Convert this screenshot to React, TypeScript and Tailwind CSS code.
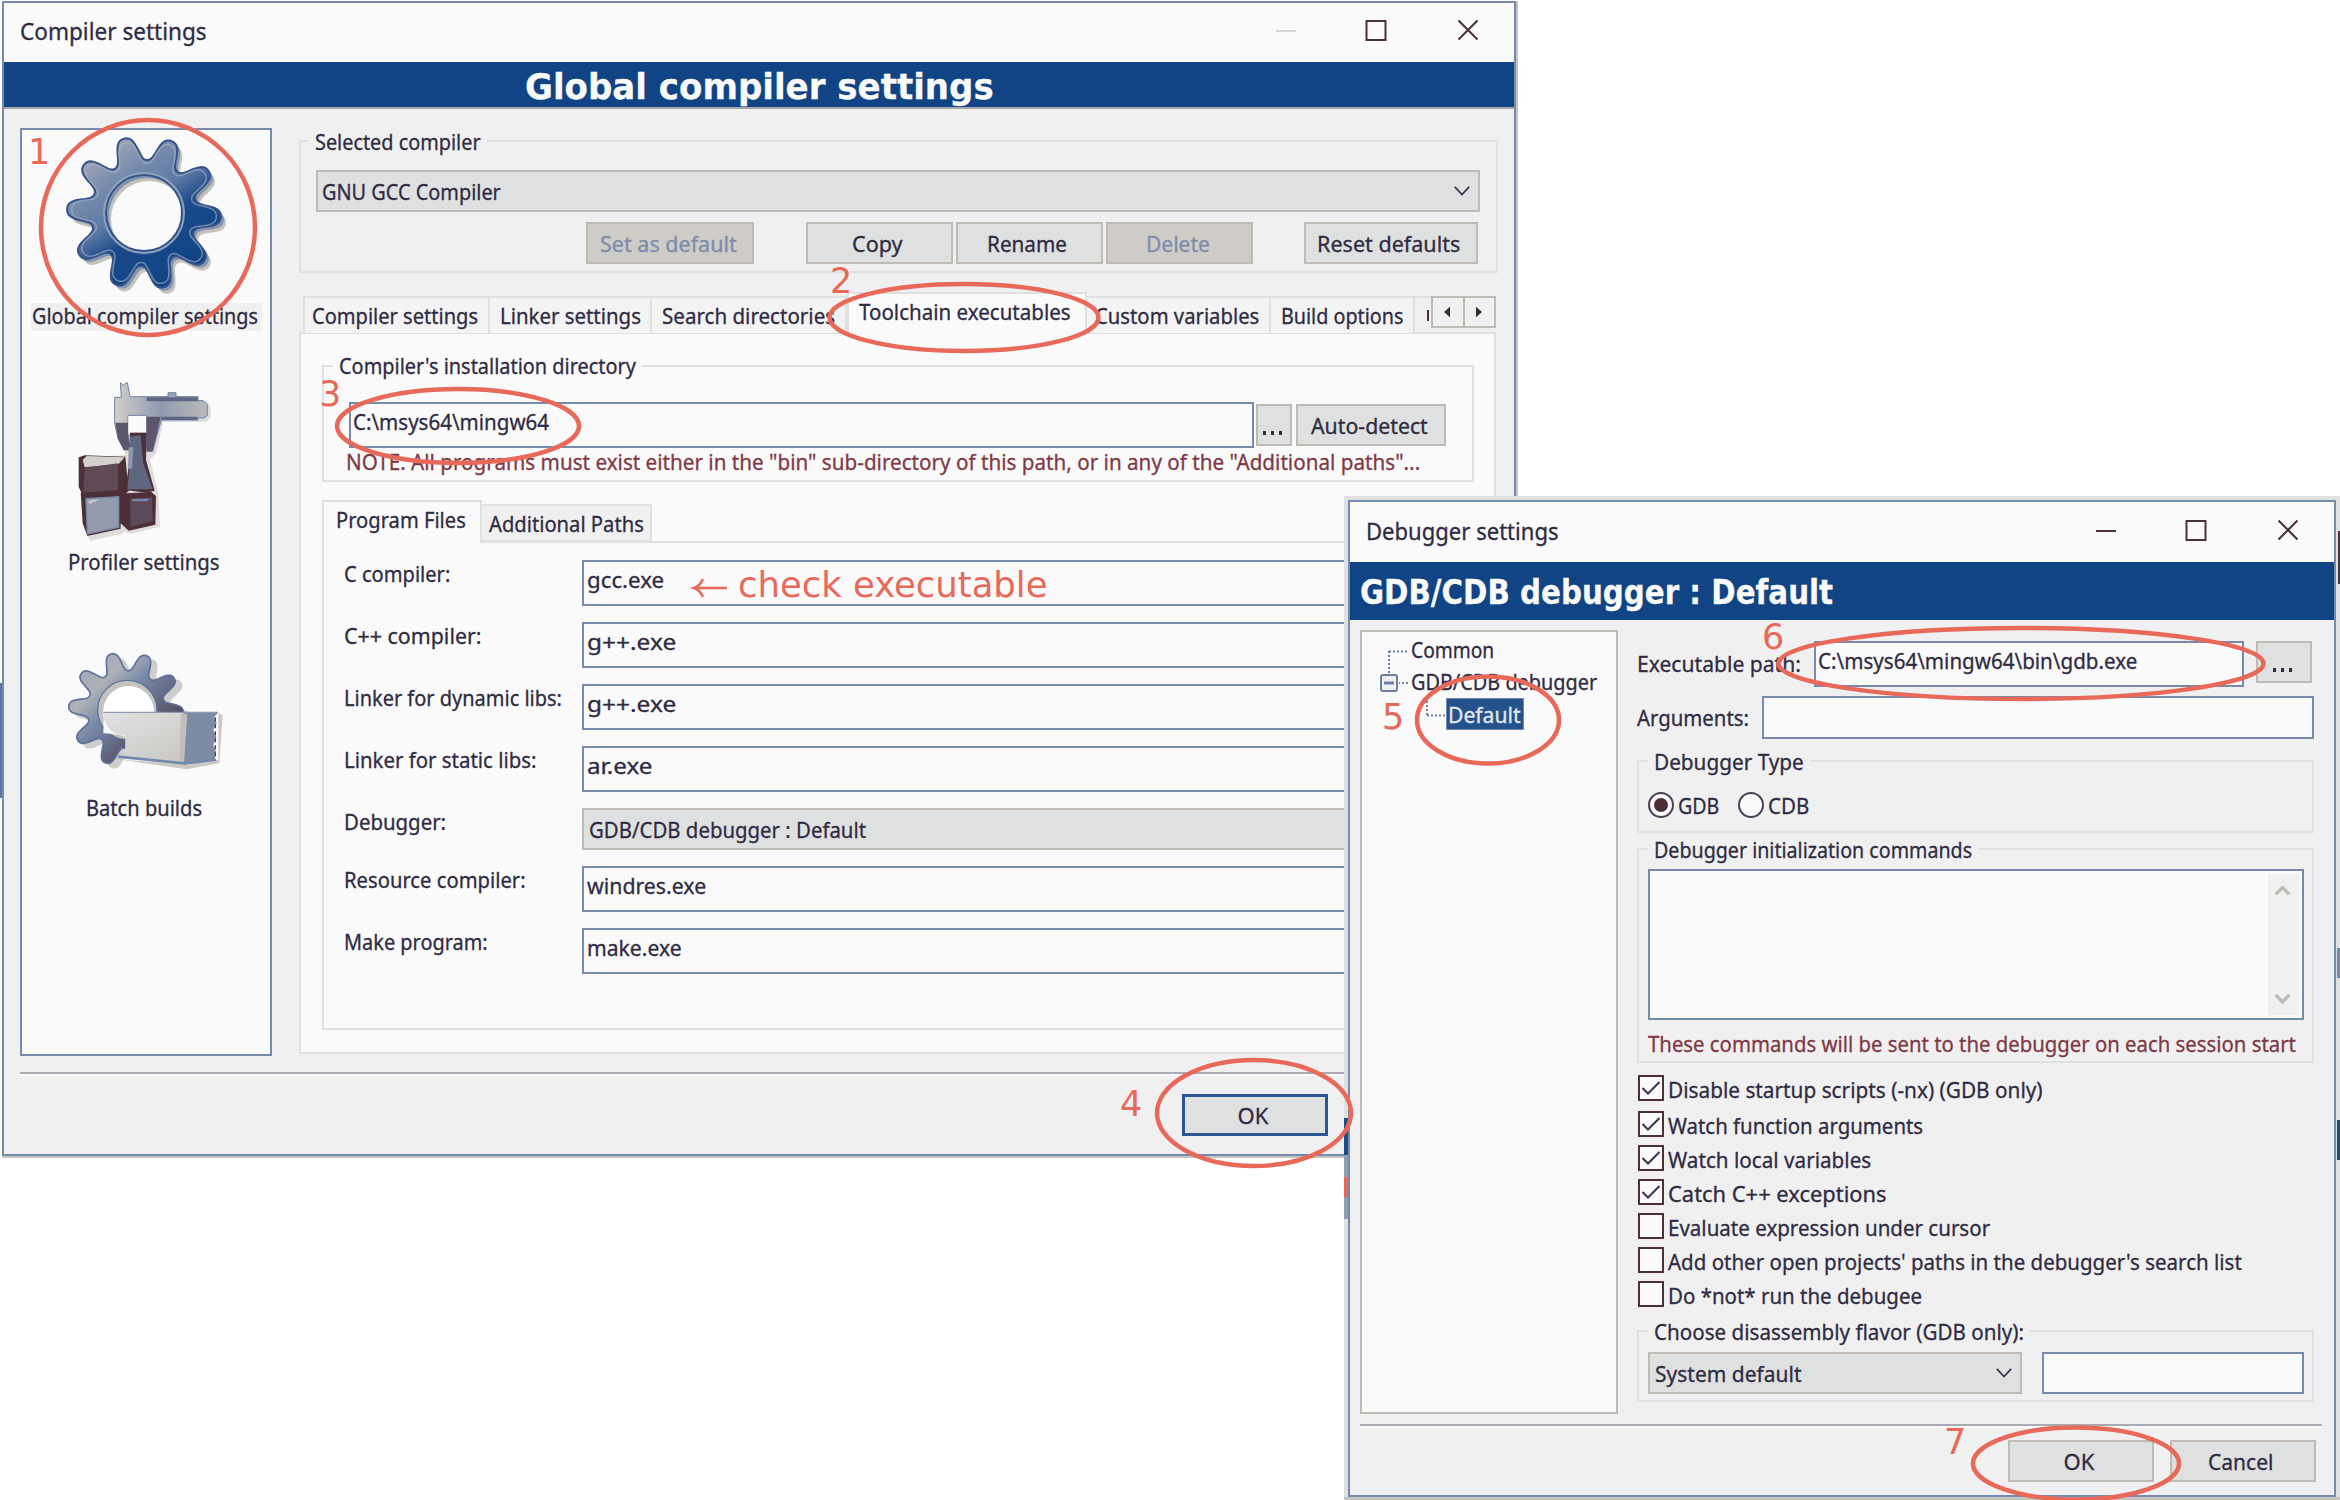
import { useLayoutEffect, useRef, useState } from "react";
import type { ReactNode } from "react";
import clsx from "clsx";

/* Single-line label squeezed or stretched to a fixed width. */
function T({ w, children, className }: { w: number; children: ReactNode; className?: string }) {
  const ref = useRef<HTMLSpanElement>(null);
  const [scale, setScale] = useState(1);
  useLayoutEffect(() => {
    if (ref.current) setScale(w / ref.current.offsetWidth);
  }, [w]);
  return (
    <span className={clsx("block shrink-0 whitespace-nowrap", className)} style={{ width: w }}>
      <span ref={ref} className="inline-block origin-left" style={{ transform: `scaleX(${scale})` }}>
        {children}
      </span>
    </span>
  );
}

function Button({ w, tw, children, className, disabled }: { w: number; tw: number; children: string; className?: string; disabled?: boolean }) {
  return (
    <button
      className={clsx(
        "flex h-[42px] shrink-0 items-center justify-center border-2 border-[#c0bab5]",
        disabled ? "bg-[#cfcbc7] text-[#7c8dab]" : "bg-[#dfe1e0]",
        className,
      )}
      style={{ width: w }}
    >
      <T w={tw}>{children}</T>
    </button>
  );
}

function Dots({ className }: { className?: string }) {
  return (
    <span className={clsx("flex gap-[5px]", className)}>
      <i className="h-[4px] w-[3px] bg-[#2f2b42]" />
      <i className="h-[4px] w-[3px] bg-[#2f2b42]" />
      <i className="h-[4px] w-[3px] bg-[#2f2b42]" />
    </span>
  );
}

function Group({ legend, w, className, legendClass, children }: { legend: string; w: number; className: string; legendClass: string; children?: ReactNode }) {
  return (
    <div className={clsx("relative shrink-0 border-2 border-[#dfe1e0]", className)}>
      <div className={clsx("absolute -top-[15px] flex h-[28px] items-center px-[6px]", legendClass)}>
        <T w={w}>{legend}</T>
      </div>
      {children}
    </div>
  );
}

function Chevron({ className, up, w = 18, stroke = "#3a3350", sw = 2 }: { className?: string; up?: boolean; w?: number; stroke?: string; sw?: number }) {
  return (
    <svg width={w} height={w * 0.6} viewBox="0 0 20 12" className={className} fill="none" stroke={stroke} strokeWidth={sw}>
      <path d={up ? "M2 11 L10 3 L18 11" : "M2 1 L10 9.5 L18 1"} />
    </svg>
  );
}

function WindowButtons({ faded, className }: { faded?: boolean; className?: string }) {
  return (
    <svg width="204" height="24" viewBox="0 0 204 24" className={className} fill="none" stroke="#4d2f38" strokeWidth="2">
      <path d="M1 12 H21" stroke={faded ? "#d4d4d4" : "#4d2f38"} />
      <rect x="91.500" y="2" width="19" height="19" />
      <path d="M183.500 1.500 L202.500 20.500 M202.500 1.500 L183.500 20.500" />
    </svg>
  );
}

function gearPath(cx: number, cy: number, base: number, amp: number, turn: number) {
  const pts: string[] = [];
  for (let a = 0; a < 360; a += 1.5) {
    const c = Math.cos((10 * (a - turn) * Math.PI) / 180);
    const r = base + (amp * Math.tanh(1.3 * c)) / Math.tanh(1.3);
    const t = (a * Math.PI) / 180;
    pts.push(`${(cx + r * Math.cos(t)).toFixed(2)} ${(cy + r * Math.sin(t)).toFixed(2)}`);
  }
  return `M${pts.join("L")}Z`;
}
function ring(cx: number, cy: number, r: number) {
  return `M${cx - r} ${cy}a${r} ${r} 0 1 0 ${2 * r} 0a${r} ${r} 0 1 0 ${-2 * r} 0Z`;
}

function BlueGear() {
  const d = gearPath(78, 83, 65, 12, 3) + ring(78, 83, 38);
  return (
    <svg width="168" height="170" viewBox="0 0 168 170" className="ml-[44px] shrink-0">
      <defs>
        <linearGradient id="blue" x1="0.15" y1="0" x2="0.75" y2="0.9">
          <stop offset="0" stopColor="#b3b3b9" />
          <stop offset="0.3" stopColor="#768bab" />
          <stop offset="0.5" stopColor="#5d7aa5" />
          <stop offset="0.66" stopColor="#1a4a89" />
          <stop offset="1" stopColor="#104485" />
        </linearGradient>
      </defs>
      <path d={d} fill="#c6c1bd" fillRule="evenodd" transform="translate(5 6)" />
      <path d={d} fill="#8495b0" fillRule="evenodd" transform="translate(3 3)" />
      <path d={d} fill="url(#blue)" fillRule="evenodd" stroke="#33538a" strokeWidth="2" />
      <path d={gearPath(78, 83, 61, 11.5, 3)} fill="none" stroke="#aab4c6" strokeWidth="1.5" opacity="0.6" />
      <circle cx="78" cy="83" r="40" fill="none" stroke="#8fa0bb" strokeWidth="2" />
    </svg>
  );
}

function CaliperIcon() {
  return (
    <svg width="200" height="180" viewBox="0 0 600 540" className="ml-[28px] shrink-0">
      <defs>
        <linearGradient id="steel" x1="0" y1="0" x2="1" y2="0">
          <stop offset="0" stopColor="#d2cecb" />
          <stop offset="0.5" stopColor="#8e9ab0" />
          <stop offset="1" stopColor="#bdb9b8" />
        </linearGradient>
      </defs>
      <path d="M206 92H470L482 112V140L470 156H340L318 250 300 270 325 370 330 470 240 492 222 484 216 492 120 512 104 480V262L226 256 206 190Z" fill="#dedddb" />
      <path d="M211 38L220 46 226 40 232 38 240 80H354V68H378V80H444V92H460L472 104V136L462 144H444V150H334L318 206 308 244H290V136H234V190L240 240H222L204 206 194 160V82H214Z" fill="url(#steel)" stroke="#6f83a5" strokeWidth="3" />
      <path d="M290 82H444V94H290Z M334 140H442V150H334Z" fill="#5d6684" />
      <path d="M196 158H234V190L240 240H222L204 206Z M290 140H332L308 244H290Z" fill="#5c566d" />
      <path d="M235 138H288V186H248L235 192Z" fill="#fafafa" />
      <path d="M86 262L104 256 226 260 236 364 212 380 96 372 86 350Z" fill="#4d2f38" />
      <path d="M98 270L110 258 224 262 206 282 104 292Z" fill="#d3d0ce" />
      <path d="M104 294L204 280V364L112 376 100 366Z" fill="#614956" />
      <path d="M240 188H290L288 270 314 362 290 368 226 360 236 290Z" fill="#4d2f38" />
      <path d="M240 200L272 196 280 280 308 358 232 358 238 296Z" fill="#5f667f" />
      <path d="M236 232H250L246 296H234Z" fill="#8e99b0" />
      <path d="M92 368L208 360 228 370 304 366 318 378 316 464 236 482 212 460V476L112 498 98 460Z" fill="#4d2f38" />
      <path d="M108 386L206 380V472L112 492Z" fill="#949bac" stroke="#768bab" strokeWidth="4" />
      <path d="M112 394L130 388 150 388 120 402Z" fill="#c9c5c2" />
      <path d="M240 388L306 382 308 454 242 470Z" fill="#5b4a5b" />
      <path d="M244 386H300L290 394H250Z" fill="#7789a6" />
    </svg>
  );
}

function BatchIcon() {
  return (
    <svg width="200" height="150" viewBox="0 0 600 450" className="ml-[28px] shrink-0">
      <defs>
        <linearGradient id="grey" x1="0.1" y1="0.1" x2="0.8" y2="0.8">
          <stop offset="0" stopColor="#9da6b5" />
          <stop offset="0.25" stopColor="#b0b1b8" />
          <stop offset="0.5" stopColor="#7486a6" />
          <stop offset="1" stopColor="#4f4258" />
        </linearGradient>
        <linearGradient id="box" x1="0" y1="0" x2="0.7" y2="1">
          <stop offset="0" stopColor="#e0e2e1" />
          <stop offset="1" stopColor="#ccc9c6" />
        </linearGradient>
        <clipPath id="gearclip">
          <path d="M0 0H600V248H160V310L226 316V450H0Z" />
        </clipPath>
      </defs>
      <g clipPath="url(#gearclip)">
        <path d={gearPath(238, 242, 146, 28, 3) + ring(232, 242, 82)} fill="#cfccc9" fillRule="evenodd" transform="translate(10 10)" />
        <path d={gearPath(228, 238, 144, 28, 3) + ring(232, 240, 88)} fill="url(#grey)" fillRule="evenodd" stroke="#5d7298" strokeWidth="5" />
        <circle cx="232" cy="240" r="80" fill="none" stroke="#c5c1bd" strokeWidth="14" />
        <circle cx="236" cy="244" r="76" fill="#fff" />
      </g>
      <path d="M204 388L410 418 508 400 518 256 505 250V390L408 404Z" fill="#cbc7c3" />
      <path d="M160 246H412L408 404 200 382 228 366V318L196 310Q160 290 160 246Z" fill="url(#box)" />
      <path d="M400 248H504L492 262 500 280 490 300 499 320 490 345 498 365 494 392 402 404Z" fill="#7e8ba5" />
      <path d="M392 252H412L402 402 388 396Z" fill="#c3beba" />
      <path d="M204 380L402 400 490 390" fill="none" stroke="#7389ab" strokeWidth="8" />
      <path d="M160 247H504" stroke="#8d9bb1" strokeWidth="4" />
      <path d="M496 262V392" stroke="#4d3a4d" strokeWidth="4" strokeDasharray="12 9" />
    </svg>
  );
}

const tabs: [string, string, number, string][] = [
  ["Compiler settings", "w-[187px] pl-[7px]", 166, ""],
  ["Linker settings", "w-[162px] pl-[10px]", 141, ""],
  ["Search directories", "w-[195px] pl-[10px]", 173, ""],
  ["Toolchain executables", "w-[240px] pl-[10px]", 212, "active"],
  ["Custom variables", "w-[184px] pl-[8px]", 164, ""],
  ["Build options", "w-[144px] pl-[10px]", 122, ""],
];

const programs: [string, number, string, number][] = [
  ["C compiler:", 106, "gcc.exe", 77],
  ["C++ compiler:", 138, "g++.exe", 89],
  ["Linker for dynamic libs:", 218, "g++.exe", 89],
  ["Linker for static libs:", 192, "ar.exe", 65],
  ["Debugger:", 102, "GDB/CDB debugger : Default", 277],
  ["Resource compiler:", 182, "windres.exe", 119],
  ["Make program:", 144, "make.exe", 95],
];

function CompilerWindow() {
  return (
    <section className="absolute top-px left-[2px] flex h-[1155px] w-[1514px] flex-col border-2 border-[#768bab] bg-[#f0f0f0] shadow-[1px_1px_0_1px_#c6c3c0]">
      <header className="flex h-[59px] shrink-0 items-center justify-between bg-[#fafafa] pr-[35px] pb-[3px] pl-[16px] text-[24px]">
        <T w={187}>Compiler settings</T>
        <WindowButtons faded className="-mt-[1px]" />
      </header>
      <div className="flex h-[47px] shrink-0 items-center border-b-2 border-[#a5a6ac] bg-[#104485] pl-[521px] font-['DejaVu_Sans'] text-[36px] leading-none font-bold text-[#fafafa]">
        <T w={469} className="pt-[4px]">Global compiler settings</T>
      </div>
      <div className="flex pt-[19px] pl-[16px]">
        <aside className="mr-[27px] flex h-[928px] w-[252px] shrink-0 flex-col border-2 border-[#768bab] bg-[#fafafa]">
          <BlueGear />
          <div className="mt-[3px] ml-[9px] flex h-[28px] w-[231px] items-center bg-[#f0f0f0] pb-[4px] pl-px">
            <T w={226}>Global compiler settings</T>
          </div>
          <div className="mt-[39px]"><CaliperIcon /></div>
          <div className="-mt-[3px] ml-[46px] flex h-[28px] items-center">
            <T w={152}>Profiler settings</T>
          </div>
          <div className="mt-[55px]"><BatchIcon /></div>
          <div className="mt-[13px] ml-[64px] flex h-[28px] items-center">
            <T w={116}>Batch builds</T>
          </div>
        </aside>

        <div className="flex w-[1199px] shrink-0 flex-col pt-[12px]">
          <Group legend="Selected compiler" w={166} className="h-[133px]" legendClass="left-[8px] bg-[#f0f0f0]">
            <div className="mt-[28px] ml-[15px] flex h-[42px] w-[1164px] items-center justify-between border-2 border-[#c0bab5] bg-[#dfe1e0] pr-[7px] pl-[4px]">
              <T w={179}>GNU GCC Compiler</T>
              <Chevron />
            </div>
            <div className="mt-[10px] ml-[285px] flex">
              <Button w={168} tw={137} className="pr-[4px]" disabled>Set as default</Button>
              <Button w={147} tw={51} className="ml-[52px] pr-[4px]">Copy</Button>
              <Button w={147} tw={80} className="ml-[3px] pr-[5px]">Rename</Button>
              <Button w={147} tw={64} className="ml-[3px] pr-[4px]" disabled>Delete</Button>
              <Button w={174} tw={143} className="ml-[51px] pr-[5px]">Reset defaults</Button>
            </div>
          </Group>

          <div className="relative z-10 mt-[19px] ml-[4px] flex h-[41px]">
            {tabs.map(([label, cls, w, active]) => (
              <div
                key={label}
                className={clsx(
                  "flex shrink-0 items-center border-t-2 border-r-2 border-[#dfe1e0]",
                  cls,
                  active ? "-mb-px h-[42px] border-l-2 bg-[#fafafa] pb-[6px]" : "mt-[4px] h-[37px] bg-[#f3f3f3] pb-[1px] first:border-l-2",
                )}
              >
                <T w={w}>{label}</T>
              </div>
            ))}
            <div className="mt-[4px] flex h-[37px] w-[16px] items-center overflow-hidden border-t-2 border-[#dfe1e0] pl-[12px]">
              <span className="h-[11px] w-[2px] bg-[#4d2f38]" />
            </div>
            <div className="mt-[4px] flex h-[32px] w-[65px] border-2 border-[#c0bab5]">
              <div className="flex flex-1 items-center justify-center border-r-2 border-[#c0bab5] pr-px">
                <svg width="6" height="12" viewBox="0 0 7 12"><path d="M7 0V12L0 6Z" fill="#3a2b3c" /></svg>
              </div>
              <div className="flex flex-1 items-center justify-center pr-px">
                <svg width="6" height="12" viewBox="0 0 7 12"><path d="M0 0V12L7 6Z" fill="#3a2b3c" /></svg>
              </div>
            </div>
          </div>

          <div className="-mt-px flex h-[722px] w-[1197px] flex-col border-2 border-[#dfe1e0] bg-[#fafafa] pl-[21px]">
            <Group legend="Compiler's installation directory" w={297} className="mt-[31px] h-[117px] w-[1152px]" legendClass="left-[9px] bg-[#fafafa] pb-[2px]">
              <div className="mt-[35px] ml-[25px] flex">
                <div className="flex h-[46px] w-[905px] items-center border-2 border-[#768bab] pb-[9px] pl-[2px]">
                  <T w={196}>C:\msys64\mingw64</T>
                </div>
                <div className="mt-[2px] ml-[2px] flex h-[42px] w-[36px] justify-center border-2 border-[#c0bab5] bg-[#dfe1e0] pr-[3px]">
                  <Dots className="mt-[25px]" />
                </div>
                <Button w={150} tw={117} className="mt-[2px] ml-[4px] pr-[4px]">Auto-detect</Button>
              </div>
              <div className="ml-[22px] flex h-[28px] items-center pb-[2px] text-[#7f3944]">
                <T w={1074}>NOTE: All programs must exist either in the "bin" sub-directory of this path, or in any of the "Additional paths"...</T>
              </div>
            </Group>
            <div className="relative z-10 mt-[18px] flex">
              <div className="h-[43px] w-[160px] border-2 border-b-0 border-[#dfe1e0] bg-[#fafafa] pt-[3px] pl-[12px]">
                <T w={130}>Program Files</T>
              </div>
              <div className="mt-[4px] h-[38px] w-[170px] border-2 border-l-0 border-[#dfe1e0] bg-[#f0f0f0] pt-[3px] pl-[7px]">
                <T w={155}>Additional Paths</T>
              </div>
            </div>
            <div className="-mt-[2px] h-[489px] w-[1153px] border-2 border-[#dfe1e0] pt-[17px] pl-[20px]">
              {programs.map(([label, lw, value, vw]) => (
                <div key={label} className={clsx("flex", label === "Debugger:" ? "h-[58px]" : "h-[62px]")}>
                  <div className="flex h-[26px] w-[238px] items-center">
                    <T w={lw}>{label}</T>
                  </div>
                  {label === "Debugger:" ? (
                    <div className="flex h-[42px] w-[870px] items-center border-2 border-[#c0bab5] bg-[#dfe1e0] pl-[5px]">
                      <T w={vw}>{value}</T>
                    </div>
                  ) : (
                    <div className="flex h-[46px] w-[870px] items-center border-2 border-[#768bab] pb-[9px] pl-[3px]">
                      <T w={vw}>{value}</T>
                    </div>
                  )}
                </div>
              ))}
            </div>
          </div>
        </div>
      </div>
      <div className="mt-[16px] ml-[16px] h-[4px] w-[1480px] shrink-0 border-t-2 border-[#a8abb2] bg-[#fafafa]" />
      <button className="mt-[18px] ml-[1178px] flex h-[42px] w-[146px] shrink-0 items-center justify-center border-[3px] border-[#2b568f] bg-[#dfe1e0] pr-[4px]">
        <T w={31}>OK</T>
      </button>
    </section>
  );
}

const checks: [string, number, boolean][] = [
  ["Disable startup scripts (-nx) (GDB only)", 375, true],
  ["Watch function arguments", 255, true],
  ["Watch local variables", 203, true],
  ["Catch C++ exceptions", 219, true],
  ["Evaluate expression under cursor", 322, false],
  ["Add other open projects' paths in the debugger's search list", 574, false],
  ["Do *not* run the debugee", 254, false],
];

function Radio({ on }: { on?: boolean }) {
  return (
    <span className="flex size-[26px] shrink-0 items-center justify-center rounded-full border-2 border-[#4a4058] bg-[#fafafa]">
      {on && <span className="size-[14px] rounded-full bg-[#4d2f38]" />}
    </span>
  );
}

function DebuggerWindow() {
  return (
    <section className="absolute top-[496px] left-[1344px] h-[1004px] w-[996px] border-b-[3px] border-[#c6c3c0] bg-[#dfe1e0] pt-[4px] pl-[4px]">
      <div className="flex h-[997px] w-[988px] flex-col border-2 border-[#768bab] bg-[#f0f0f0]">
        <header className="flex h-[60px] shrink-0 items-center justify-between bg-[#fafafa] pr-[35px] pb-[2px] pl-[16px] text-[24px]">
          <T w={193}>Debugger settings</T>
          <WindowButtons className="-mt-[1px]" />
        </header>
        <div className="flex h-[58px] shrink-0 items-center bg-[#104485] pl-[10px] font-['DejaVu_Sans'] text-[33px] leading-none font-bold text-[#fafafa]">
          <T w={473} className="pt-[2px]">GDB/CDB debugger : Default</T>
        </div>
        <div className="flex pt-[10px] pl-[10px]">
          <div className="relative mr-[19px] h-[784px] w-[258px] shrink-0 border-2 border-[#c0bab5] bg-[#fafafa] pt-px">
            <svg width="90" height="90" viewBox="0 0 90 90" className="absolute top-0 left-0" fill="none" stroke="#6b7fa3" strokeWidth="2">
              <path d="M27 19.500 H46 M27 19 V42 M46 51 H37 M65 69 V84 M65 83.500 H84" strokeDasharray="2 2" />
              <rect x="19" y="43" width="16" height="16" rx="2" fill="#f0f0f0" />
              <path d="M22 51 H32" strokeWidth="3" />
            </svg>
            <div className="flex h-[32px] items-center pl-[49px]"><T w={83}>Common</T></div>
            <div className="flex h-[33px] items-center pb-px pl-[49px]"><T w={186}>GDB/CDB debugger</T></div>
            <div className="ml-[84px] flex h-[32px] w-[78px] items-center border border-[#768bab] bg-[#24528d] pb-px pl-px text-[#e6e8ec]"><T w={73}>Default</T></div>
          </div>

          <div className="flex w-[678px] shrink-0 flex-col">
            <div className="mt-[11px] flex h-[46px]">
              <div className="flex w-[177px] items-center pb-[2px]"><T w={164}>Executable path:</T></div>
              <div className="flex w-[430px] items-center border-2 border-[#768bab] bg-[#fafafa] pb-[9px] pl-[2px]">
                <T w={319}>C:\msys64\mingw64\bin\gdb.exe</T>
              </div>
              <div className="ml-[12px] flex h-[42px] w-[56px] justify-center border-2 border-[#c0bab5] bg-[#dfe1e0] pr-[3px]">
                <Dots className="mt-[25px]" />
              </div>
            </div>
            <div className="mt-[9px] flex h-[43px]">
              <div className="flex w-[125px] items-center pb-[1px]"><T w={112}>Arguments:</T></div>
              <div className="w-[552px] border-2 border-[#768bab] bg-[#fafafa]" />
            </div>
            <Group legend="Debugger Type" w={150} className="mt-[21px] h-[73px] w-[677px]" legendClass="left-[9px] bg-[#f0f0f0]">
              <div className="mt-[29px] ml-[9px] flex items-center">
                <Radio on />
                <T w={41} className="ml-[4px]">GDB</T>
                <span className="ml-[19px]"><Radio /></span>
                <T w={41} className="ml-[4px]">CDB</T>
              </div>
            </Group>
            <Group legend="Debugger initialization commands" w={318} className="mt-[15px] h-[215px] w-[677px]" legendClass="left-[9px] bg-[#f0f0f0]">
              <div className="mt-[19px] ml-[9px] flex h-[151px] w-[656px] justify-end border-2 border-[#768bab] bg-[#fafafa] p-[3px]">
                <div className="flex w-[31px] flex-col items-center justify-between bg-[#f0f0f0] py-[11px] pr-[3px]">
                  <Chevron up w={17} stroke="#c0bab5" sw={4} />
                  <Chevron w={17} stroke="#c0bab5" sw={4} />
                </div>
              </div>
              <div className="ml-[9px] flex h-[46px] items-center text-[#7f3944]">
                <T w={648}>These commands will be sent to the debugger on each session start</T>
              </div>
            </Group>
            <div className="mt-[12px]">
              {checks.map(([label, w, on], i) => (
                <div key={label} className={clsx("flex", i === 0 ? "h-[36px]" : "h-[34px]")}>
                  <span className="ml-px flex size-[26px] shrink-0 items-center justify-center border-2 border-[#4d2f38] bg-[#fafafa]">
                    {on && (
                      <svg width="20" height="18" viewBox="0 0 20 18" fill="none" stroke="#3a3350" strokeWidth="2"><path d="M1.500 9 L7 14.500 L18.500 3" /></svg>
                    )}
                  </span>
                  <div className="ml-[4px] flex h-[28px] items-center"><T w={w}>{label}</T></div>
                </div>
              ))}
            </div>
            <Group legend="Choose disassembly flavor (GDB only):" w={370} className="mt-[15px] h-[72px] w-[677px]" legendClass="left-[9px] bg-[#f0f0f0]">
              <div className="mt-[20px] ml-[9px] flex h-[42px]">
                <div className="flex w-[374px] items-center justify-between border-2 border-[#c0bab5] bg-[#dfe1e0] pr-[7px] pl-[5px]">
                  <T w={147}>System default</T>
                  <Chevron />
                </div>
                <div className="ml-[20px] w-[262px] border-2 border-[#768bab] bg-[#fafafa]" />
              </div>
            </Group>
          </div>
        </div>
        <div className="mt-[10px] ml-[10px] h-[4px] w-[962px] shrink-0 border-t-2 border-[#a8abb2] bg-[#fafafa]" />
        <div className="mt-[12px] ml-[658px] flex">
          <Button w={146} tw={31} className="pr-[4px]">OK</Button>
          <Button w={146} tw={66} className="ml-[16px] pr-[4px]">Cancel</Button>
        </div>
      </div>
    </section>
  );
}

const ellipses = [
  [148, 227.5, 107, 107.5],
  [964, 317.5, 134.5, 33.5],
  [458, 426, 121, 37],
  [1254, 1113, 97, 53],
  [1488, 720, 71, 43.5],
  [2021, 663.5, 242.5, 35.5],
  [2076, 1463.5, 103, 36],
];

const numbers: [string, string][] = [
  ["1", "left-[28px] top-[139px]"],
  ["2", "left-[830px] top-[268px]"],
  ["3", "left-[319px] top-[381px]"],
  ["4", "left-[1120px] top-[1091px]"],
  ["5", "left-[1382px] top-[704px]"],
  ["6", "left-[1762px] top-[624px]"],
  ["7", "left-[1944px] top-[1429px]"],
];

function Annotations() {
  return (
    <div className="pointer-events-none absolute inset-0 z-20 font-['DejaVu_Sans'] text-[35px] leading-[26px] text-[#e8695a] [-webkit-text-stroke:0px]">
      <svg width="2340" height="1500" className="absolute inset-0" fill="none" stroke="#e8695a" strokeWidth="4.500">
        {ellipses.map(([cx, cy, rx, ry]) => (
          <ellipse key={cx} cx={cx} cy={cy} rx={rx} ry={ry} />
        ))}
        <path d="M727 588 H695 M703 579 Q700 586 694 588 Q700 590 703 597" strokeWidth="2.500" />
      </svg>
      {numbers.map(([n, pos]) => (
        <span key={n} className={clsx("absolute", pos)}>{n}</span>
      ))}
      <div className="absolute top-[572px] left-[738px] text-[36px]">
        <T w={310}>check executable</T>
      </div>
    </div>
  );
}

export default function App() {
  return (
    <main className="relative h-[1500px] w-[2340px] overflow-hidden bg-white font-['Noto_Sans',sans-serif] text-[22px] leading-[28px] text-[#2f2b42] [-webkit-text-stroke:0.3px]">
      <div className="absolute top-[683px] left-0 h-[115px] w-[2px] bg-[#5a78a6]" />
      <CompilerWindow />
      <DebuggerWindow />
      <div className="absolute top-[1118px] left-[1344px] h-[37px] w-[4px] bg-[#1d4c8a]" />
      <div className="absolute top-[1155px] left-[1344px] h-[64px] w-[4px] bg-[#8f9cb2]" />
      <div className="absolute top-[1177px] left-[1344px] h-[20px] w-[4px] bg-[#e8695a]" />
      <div className="absolute top-[531px] left-[2338px] h-[53px] w-[2px] bg-[#4d2f38]" />
      <div className="absolute top-[948px] left-[2337px] h-[30px] w-[3px] bg-[#768bab]" />
      <div className="absolute top-[1120px] left-[2337px] h-[40px] w-[3px] bg-[#1d4c8a]" />
      <Annotations />
    </main>
  );
}
